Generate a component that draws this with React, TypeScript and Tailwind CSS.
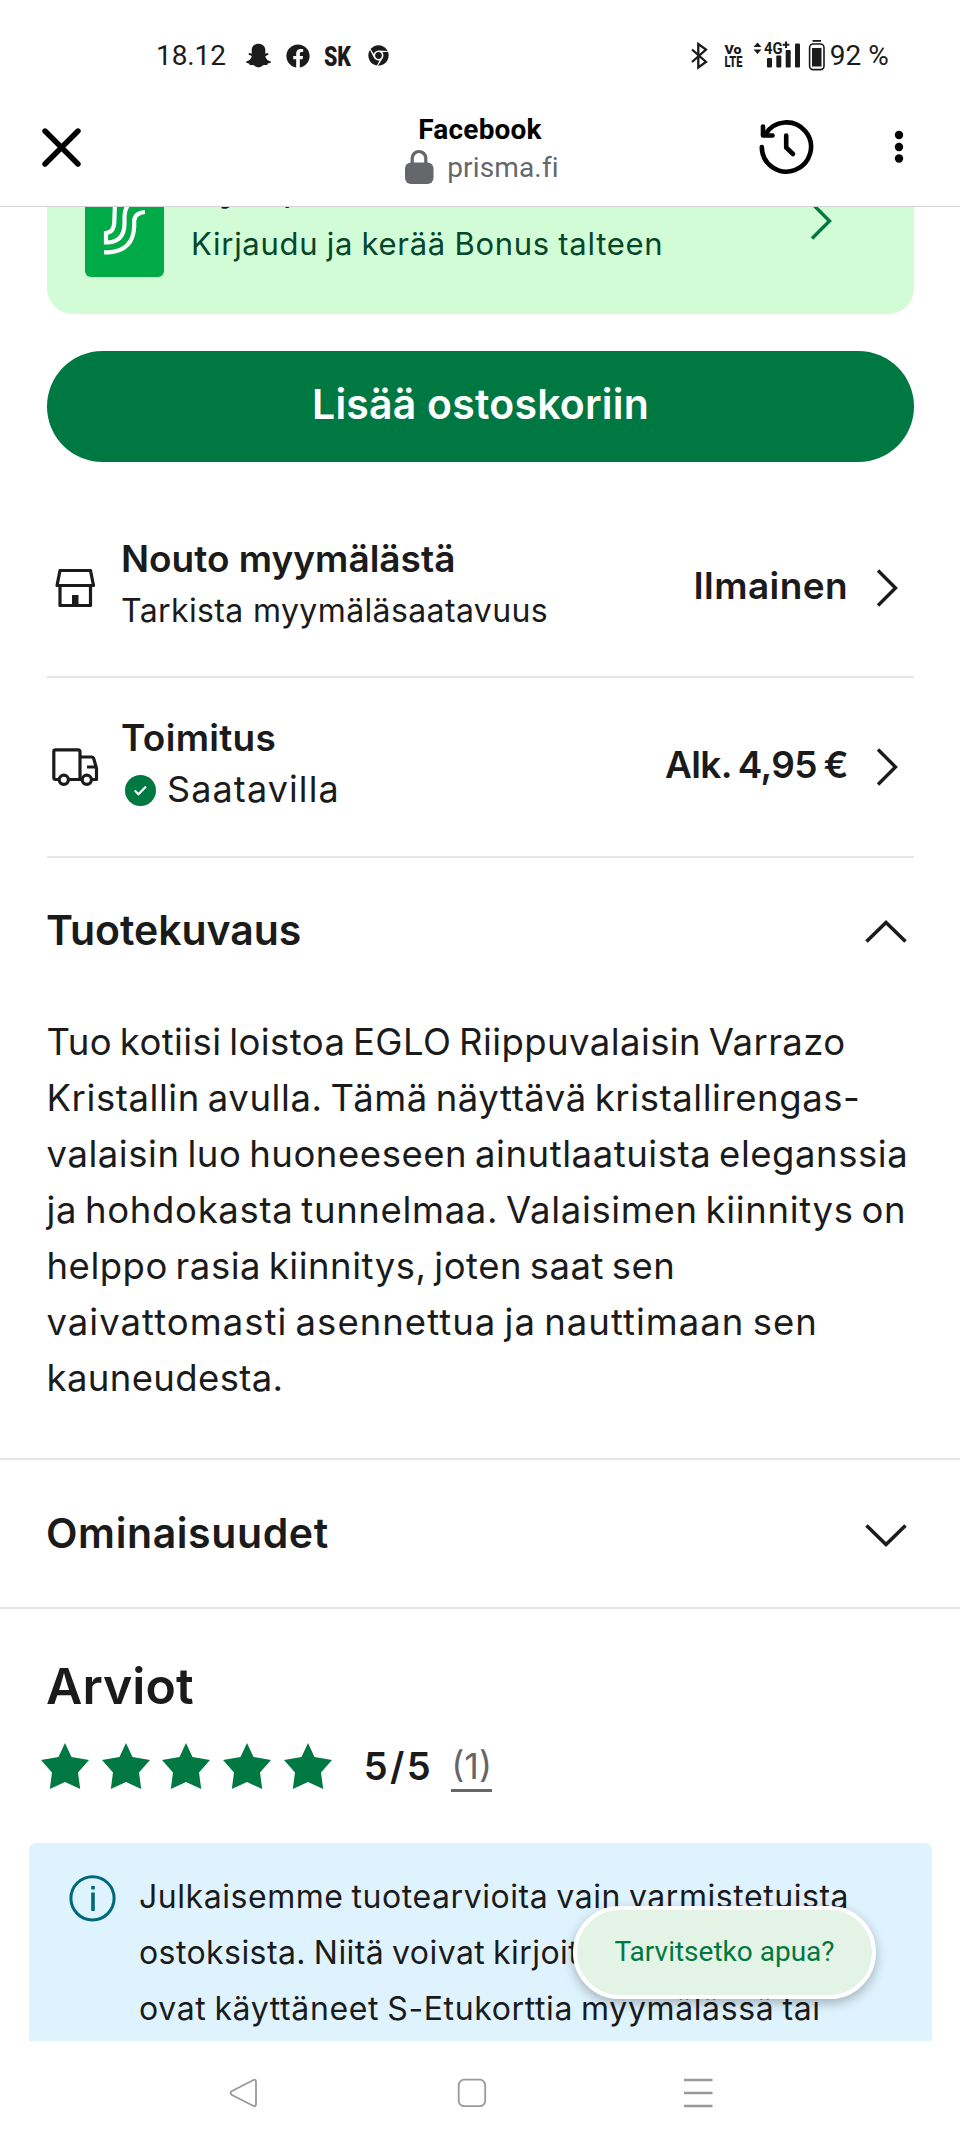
import type { ReactNode } from 'react';
import { FaChrome, FaFacebook, FaSnapchatGhost } from 'react-icons/fa';

const description = [
  { text: 'Tuo kotiisi loistoa EGLO Riippuvalaisin Varrazo', tracking: 'tracking-[0.42px]' },
  { text: 'Kristallin avulla. Tämä näyttävä kristallirengas-', tracking: 'tracking-[0.58px]' },
  { text: 'valaisin luo huoneeseen ainutlaatuista eleganssia', tracking: 'tracking-[0.55px]' },
  { text: 'ja hohdokasta tunnelmaa. Valaisimen kiinnitys on', tracking: 'tracking-[0.66px]' },
  { text: 'helppo rasia kiinnitys, joten saat sen', tracking: 'tracking-[0.51px]' },
  { text: 'vaivattomasti asennettua ja nauttimaan sen', tracking: 'tracking-[1.02px]' },
  { text: 'kauneudesta.', tracking: 'tracking-[0.37px]' },
];

function StatusBar() {
  return (
    <div className="flex h-[88px] shrink-0 items-center pt-[23px] pl-[156px] font-[Roboto,sans-serif] text-[28px] text-[#1b1b1b]">
      <span className="tracking-[-0.1px]">18.12</span>
      <FaSnapchatGhost className="ml-5 size-[25px]" />
      <FaFacebook className="ml-[15px] size-6" />
      <svg className="ml-[14px] overflow-visible" width="28" height="24" viewBox="0 0 28 24" fill="currentColor">
        <text x="0" y="21.5" fontSize="27" fontWeight="900" textLength="27" lengthAdjust="spacingAndGlyphs">SK</text>
      </svg>
      <FaChrome className="ml-4 size-[21px]" />

      <svg className="ml-[301px] overflow-visible" width="138" height="36" viewBox="690 37 138 36" fill="none" stroke="currentColor">
        <path d="M692 48.5L706 61L698.3 66.5V43L706 48.5L692 61" strokeWidth="2.3" />
        <g fill="currentColor" stroke="none" fontWeight="900">
          <text x="724.5" y="52.8" fontSize="13.5" textLength="17" lengthAdjust="spacingAndGlyphs">Vo</text>
          <text x="724.5" y="66" fontSize="14" textLength="18" lengthAdjust="spacingAndGlyphs">LTE</text>
          <text x="764" y="52.8" fontSize="16" fontWeight="700" textLength="18.5" lengthAdjust="spacingAndGlyphs">4G</text>
          <path d="M753.5 46L757.5 41.5L761.5 46ZM753.5 48.5H761.5L757.5 53Z" />
          <path d="M785 40.5h2v2.3h2.3v2H787V47h-2v-2.2h-2.3v-2H785Z" />
          <rect x="767" y="57" width="5" height="9.5" rx="1" />
          <rect x="776.3" y="54.5" width="5" height="12" rx="1" />
          <rect x="785.7" y="49" width="5" height="17.5" rx="1" />
          <rect x="795" y="42.5" width="5" height="24" rx="1" />
          <rect x="812.5" y="39" width="8.5" height="1.8" />
          <rect x="812" y="47" width="9.5" height="18.5" />
        </g>
        <rect x="809.6" y="43" width="14.4" height="25.6" rx="3.5" strokeWidth="1.6" />
      </svg>
      <span className="ml-[2px]">92 %</span>
    </div>
  );
}

function BrowserBar() {
  return (
    <header className="flex h-[119px] shrink-0 items-center border-b border-[#d3d4d6] bg-white font-[Roboto,sans-serif] text-[28px] leading-[38px]">
      <div className="w-[280px] pl-[42px]">
        <svg width="39" height="39" viewBox="0 0 39 39" stroke="#000" strokeWidth="5.4" strokeLinecap="round">
          <path d="M3 3L36 36M36 3L3 36" />
        </svg>
      </div>
      <div className="flex w-[400px] flex-col items-center pt-[3px]">
        <span className="font-bold tracking-[0.2px] text-black">Facebook</span>
        <div className="flex items-center gap-[13px] pl-[3px] text-[#65676b]">
          <svg className="-mt-[2px]" width="30" height="36" viewBox="0 0 30 36">
            <path d="M8.2 16V9.3a6.8 6.8 0 0 1 13.6 0V16" fill="none" stroke="currentColor" strokeWidth="3.2" />
            <rect x="1" y="13.5" width="28.5" height="21.5" rx="6" fill="currentColor" />
          </svg>
          <span className="tracking-[0.15px]">prisma.fi</span>
        </div>
      </div>
      <div className="flex flex-1 items-center pl-[78px]">
        <svg width="56" height="56" viewBox="758 119 56 56" fill="none" stroke="#000" strokeWidth="4.6" strokeLinecap="round" strokeLinejoin="round">
          <path d="M761.8 147A24.6 24.6 0 1 0 765.2 134.5" />
          <path d="M763 126.5V135.5H772.5" />
          <path d="M786.2 135.5V147.5L793 154" />
        </svg>
        <svg className="ml-[80px]" width="10" height="34" viewBox="0 0 10 34">
          <circle cx="5" cy="5" r="4.2" />
          <circle cx="5" cy="17" r="4.2" />
          <circle cx="5" cy="28.5" r="4.2" />
        </svg>
      </div>
    </header>
  );
}

function ChevronRight({ className }: { className?: string }) {
  return (
    <svg className={className} width="24" height="40" viewBox="0 0 24 40" fill="none" stroke="currentColor" strokeWidth="3.4">
      <path d="M3 2.5L20.5 20L3 37.5" />
    </svg>
  );
}

function BonusBanner() {
  return (
    <div className="mr-[46px] ml-[47px] flex h-[107px] items-start rounded-b-[26px] bg-[#d1fcd6] pl-[38px]">
      <svg className="rounded-b-[6px] bg-[#00aa46]" width="79" height="70" viewBox="0 0 79 70" fill="none" stroke="#fff" strokeWidth="4.2">
        <path d="M19 26H20.5Q29 25.5 29.3 15L29.8 0" />
        <path d="M21 24V37.5M19 35.5H23Q39 34.5 39.5 17V9Q39.5 3 43 -2" />
        <path d="M19 45.3H24Q48 43.5 49.2 20V14Q49.5 6 60 5" />
      </svg>
      <div className="-mt-[39px] ml-[27px]">
        <p className="mb-4 text-[37px] leading-10 font-semibold text-[#1b1b1b]">Hyvä,</p>
        <p className="text-[31px] leading-10 tracking-[0.72px] text-[#05472a] [word-spacing:-1px]">Kirjaudu ja kerää Bonus talteen</p>
      </div>
      <ChevronRight className="-mt-[6px] mr-[81px] ml-auto text-[#007841]" />
    </div>
  );
}

function StoreIcon() {
  return (
    <svg width="48" height="48" viewBox="51 564 48 48" fill="none" stroke="currentColor" strokeWidth="3.2" strokeLinejoin="round">
      <path d="M60 570.5H90.5L93.5 585.5H57ZM60 586V605.5H90.5V586" />
      <rect x="72" y="595" width="6.5" height="11" fill="currentColor" stroke="none" />
    </svg>
  );
}

function TruckIcon() {
  return (
    <svg width="48" height="48" viewBox="51 743.5 48 48" fill="none" stroke="currentColor" strokeWidth="3.2" strokeLinejoin="round">
      <path d="M58.5 780H56Q53.8 780 53.8 778V752Q53.8 750.3 55.5 750.3H78Q80 750.3 80 752.3V780H69" />
      <path d="M80 757.5H91.5Q93.3 757.5 94 760L96.5 769V780H92M81.5 780H80M96 767.5H87" />
      <circle cx="63.8" cy="780.3" r="4.6" />
      <circle cx="86.8" cy="780.3" r="4.6" />
    </svg>
  );
}

type DeliveryRowProps = {
  icon: ReactNode;
  title: ReactNode;
  price: ReactNode;
  className: string;
  children: ReactNode;
};

function DeliveryRow({ icon, title, price, className, children }: DeliveryRowProps) {
  return (
    <div className={`mr-[46px] ml-[47px] flex items-start border-b-2 border-[#e6e6e6] ${className}`}>
      <div className="flex h-[100px] w-full items-center">
        <div className="mt-2 ml-1 shrink-0">{icon}</div>
        <div className="mt-[2px] ml-[22px] flex flex-col gap-1">
          <h3 className="text-[37px] leading-[48px] font-semibold">{title}</h3>
          {children}
        </div>
        <div className="mt-1 ml-auto text-[37px] leading-[48px] font-semibold">{price}</div>
        <ChevronRight className="mt-2 mr-[15px] ml-[27px]" />
      </div>
    </div>
  );
}

function Chevron({ up }: { up?: boolean }) {
  return (
    <svg className="mt-[3px]" width="44" height="28" viewBox="0 0 44 28" fill="none" stroke="currentColor" strokeWidth="3.6">
      <path d={up ? 'M2.5 23.5L22 4.5L41.5 23.5' : 'M2.5 4.5L22 23.5L41.5 4.5'} />
    </svg>
  );
}

function Reviews() {
  return (
    <section className="pt-[45px]">
      <h2 className="pl-[46px] text-[50px] leading-[64px] font-semibold">Arviot</h2>
      <div className="mt-5 flex h-14 items-center pl-[41px]">
        <div className="flex gap-[12.7px]">
          {[1, 2, 3, 4, 5].map((n) => (
            <svg key={n} width="48" height="46" viewBox="0 0 48 46" fill="#007841">
              <path d="M24 0L30.5 14L48 17L37 29.5L39.2 46L24 39L8.8 46L11 29.5L0 17L17.5 14Z" />
            </svg>
          ))}
        </div>
        <span className="ml-8 text-[38px] leading-[48px] font-semibold tracking-[2.4px]">5/5</span>
        <span className="mt-[3px] ml-[18px] border-b-[3px] border-[#666] text-[36px] leading-[46px] text-[#666]">(1)</span>
      </div>
      <div className="mt-[49px] mr-[28px] ml-[29px] flex h-[230px] items-start rounded-t-[7px] bg-[#dff3fe] pt-[26px] pl-10">
        <svg className="mt-[6px] shrink-0" width="47" height="47" viewBox="0 0 47 47" fill="none" stroke="#00687d" strokeWidth="3">
          <circle cx="23.5" cy="23.3" r="21.6" />
          <path d="M24 17.5V36M24 11V14.5" strokeWidth="3.6" />
        </svg>
        <div className="ml-[23px] text-[32px] leading-[56px] whitespace-nowrap [word-spacing:-1.5px]">
          <p className="tracking-[0.55px]">Julkaisemme tuotearvioita vain varmistetuista</p>
          <p className="tracking-[0.42px]">ostoksista. Niitä voivat kirjoit</p>
          <p className="tracking-[0.62px]">ovat käyttäneet S-Etukorttia myymälässä tai</p>
        </div>
      </div>
    </section>
  );
}

function NavBar() {
  return (
    <nav className="flex h-[103px] shrink-0 items-center bg-white pl-[229px]">
      <svg width="30" height="30" viewBox="0 0 30 30" fill="none" stroke="#999" strokeWidth="1.8">
        <path d="M3 13L24.5 2Q27 1 27 4V26Q27 29 24.5 28L3 17Q0 15 3 13Z" />
      </svg>
      <svg className="ml-[198px]" width="30" height="30" viewBox="0 0 30 30" fill="none" stroke="#999" strokeWidth="1.8">
        <rect x="1.7" y="1.7" width="26.5" height="26.5" rx="5.5" />
      </svg>
      <svg className="ml-[197px]" width="30" height="30" viewBox="0 0 30 30" stroke="#999" strokeWidth="2.4">
        <path d="M0 2H28.5M0 15H28.5M0 28H28.5" />
      </svg>
    </nav>
  );
}

export default function App() {
  return (
    <div className="flex h-[2144px] w-[960px] flex-col overflow-hidden bg-white font-[Inter,sans-serif] text-[#1b1b1b]">
      <StatusBar />
      <BrowserBar />

      <main className="relative flex-1 overflow-hidden">
        <BonusBanner />

        <button className="mt-[37px] ml-[47px] block h-[111px] w-[867px] rounded-full bg-[#007841] pb-[3px] text-[41px] font-semibold tracking-[0.2px] text-white">
          Lisää ostoskoriin
        </button>

        <DeliveryRow
          className="h-[216px] pt-[72px]"
          icon={<StoreIcon />}
          title="Nouto myymälästä"
          price={<span className="tracking-[0.4px]">Ilmainen</span>}
        >
          <p className="text-[32px] leading-[48px] tracking-[0.38px]">Tarkista myymäläsaatavuus</p>
        </DeliveryRow>
        <DeliveryRow
          className="h-[180px] pt-[35px]"
          icon={<TruckIcon />}
          title={<span className="-mt-px mb-px block tracking-[0.3px]">Toimitus</span>}
          price={<span className="tracking-[-0.65px] [word-spacing:-2px]">Alk. 4,95 €</span>}
        >
          <div className="flex items-center">
            <svg className="ml-1" width="31" height="31" viewBox="0 0 31 31">
              <circle cx="15.5" cy="15.5" r="15.5" fill="#007841" />
              <path d="M9.8 15.5L13.5 19.2L21 11.5" fill="none" stroke="#fff" strokeWidth="2.2" />
            </svg>
            <span className="-mt-[2px] ml-[11px] text-[36px] leading-[48px] tracking-[1.1px]">Saatavilla</span>
          </div>
        </DeliveryRow>

        <section className="h-[602px] border-b-2 border-[#e6e6e6]">
          <div className="mr-[52px] ml-[46px] flex h-36 items-center justify-between">
            <h2 className="pt-px text-[41px] font-semibold tracking-[-0.05px]">Tuotekuvaus</h2>
            <Chevron up />
          </div>
          <div className="mt-3 pl-[46.5px] text-[36.5px] leading-[56px] whitespace-nowrap [word-spacing:-3px]">
            {description.map((line) => (
              <p key={line.text} className={line.tracking}>{line.text}</p>
            ))}
          </div>
        </section>

        <section className="h-[149px] border-b-2 border-[#e6e6e6]">
          <div className="mr-[52px] ml-[46px] flex h-full items-center justify-between">
            <h2 className="text-[41px] font-semibold tracking-[0.6px]">Ominaisuudet</h2>
            <Chevron />
          </div>
        </section>

        <Reviews />

        {/* Chat bubble */}
        <button className="absolute right-[84px] bottom-[42px] h-[93px] w-[303px] rounded-full border-4 border-white bg-[#e3f3e5] pb-[2px] font-[Roboto,sans-serif] text-[28px] text-[#007841] shadow-[0_4px_12px_rgba(0,0,0,0.28)]">
          Tarvitsetko apua?
        </button>
      </main>

      <NavBar />
    </div>
  );
}
